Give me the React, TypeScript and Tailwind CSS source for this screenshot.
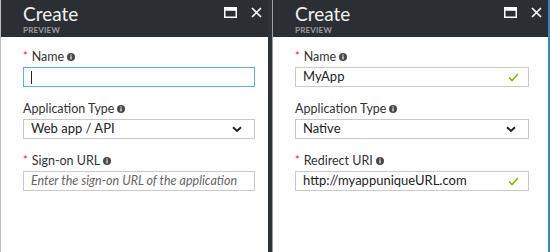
import React from "react";

const font = { fontFamily: '"Segoe UI", Lato, "Open Sans", sans-serif' };

const Info = () => (
  <svg width="8" height="8" viewBox="0 0 8 8" className="ml-[3px] inline-block">
    <circle cx="4" cy="4" r="4" fill="#4a4a4a" />
    <rect x="3.4" y="3.3" width="1.2" height="3" fill="#fff" />
    <rect x="3.4" y="1.5" width="1.2" height="1.1" fill="#fff" />
  </svg>
);

const Check = () => (
  <svg width="11" height="9" viewBox="0 0 11 9" className="absolute right-[9px] top-[5px]">
    <path d="M1 4.5 L4 7.5 L10 1" fill="none" stroke="#7fba00" strokeWidth="1.6" />
  </svg>
);

const Chevron = () => (
  <svg width="10" height="7" viewBox="0 0 10 7" className="absolute right-[12px] top-[6px]">
    <path d="M1 1.2 L5 5 L9 1.2" fill="none" stroke="#222" strokeWidth="1.9" />
  </svg>
);

const Label = ({ text, required }: { text: string; required?: boolean }) => (
  <div className="flex items-center h-[16px] text-[12.5px] text-[#333] whitespace-nowrap">
    {required && <span className="text-[#e81123] text-[11px] mr-[4px] -mt-[2px]">*</span>}
    <span>{text}</span>
    <Info />
  </div>
);

type Field = {
  label: string;
  required?: boolean;
  value?: string;
  placeholder?: string;
  select?: boolean;
  focused?: boolean;
  valid?: boolean;
};

const Input = ({ f }: { f: Field }) => (
  <div
    className={
      "relative h-[20px] mt-[2px] border flex items-center pl-[7px] text-[13px] whitespace-nowrap overflow-hidden " +
      (f.focused ? "border-[#59b4d9]" : "border-[#c9c9c9]")
    }
  >
    {f.focused && <span className="w-px h-[13px] bg-[#222]" />}
    {f.value && <span className="text-[#222]">{f.value}</span>}
    {f.placeholder && <span className="italic text-[#666] text-[12.5px]">{f.placeholder}</span>}
    {f.select && <Chevron />}
    {f.valid && <Check />}
  </div>
);

const Blade = ({ fields, pl, pr }: { fields: Field[]; pl: string; pr: string }) => (
  <div className="flex flex-col flex-1 bg-white">
    <div className="h-[37px] bg-[#2b2f33] flex items-start justify-between">
      <div className={"flex flex-col " + pl}>
        <span className="text-[19px] leading-[18px] mt-[5px] text-[#f2f2f2]">Create</span>
        <span className="text-[8px] font-bold leading-[8px] mt-[3px] text-[#9a9ea2] tracking-wide">PREVIEW</span>
      </div>
      <div className="flex items-center gap-[14px] mt-[7px] mr-[6px]">
        <svg width="13" height="11" viewBox="0 0 13 11">
          <rect x="0.75" y="0.75" width="11.5" height="9.5" fill="none" stroke="#fff" strokeWidth="1.5" />
          <rect x="0.75" y="0.75" width="11.5" height="3" fill="#fff" />
        </svg>
        <svg width="11" height="11" viewBox="0 0 11 11">
          <path d="M1 1 L10 10 M10 1 L1 10" stroke="#fff" strokeWidth="1.7" />
        </svg>
      </div>
    </div>
    <div className={"flex flex-col gap-[14px] pt-[12px] " + pl + " " + pr}>
      {fields.map((f) => (
        <div key={f.label}>
          <Label text={f.label} required={f.required} />
          <Input f={f} />
        </div>
      ))}
    </div>
  </div>
);

export default function App() {
  return (
    <div className="w-[550px] h-[252px] flex overflow-hidden bg-white" style={font}>
      <div className="w-[268px] flex border-l border-[#bdbdbd]">
        <Blade
          pl="pl-[22px]"
          pr="pr-[13px]"
          fields={[
            { label: "Name", required: true, focused: true },
            { label: "Application Type", value: "Web app / API", select: true },
            { label: "Sign-on URL", required: true, placeholder: "Enter the sign-on URL of the application" },
          ]}
        />
      </div>
      <div className="w-[5px] bg-[#2e3337] border-r border-[#9aa0a5]" />
      <div className="flex-1 flex border-r-2 border-[#3a86c0]">
        <Blade
          pl="pl-[22px]"
          pr="pr-[19px]"
          fields={[
            { label: "Name", required: true, value: "MyApp", valid: true },
            { label: "Application Type", value: "Native", select: true },
            { label: "Redirect URI", required: true, value: "http://myappuniqueURL.com", valid: true },
          ]}
        />
      </div>
    </div>
  );
}
